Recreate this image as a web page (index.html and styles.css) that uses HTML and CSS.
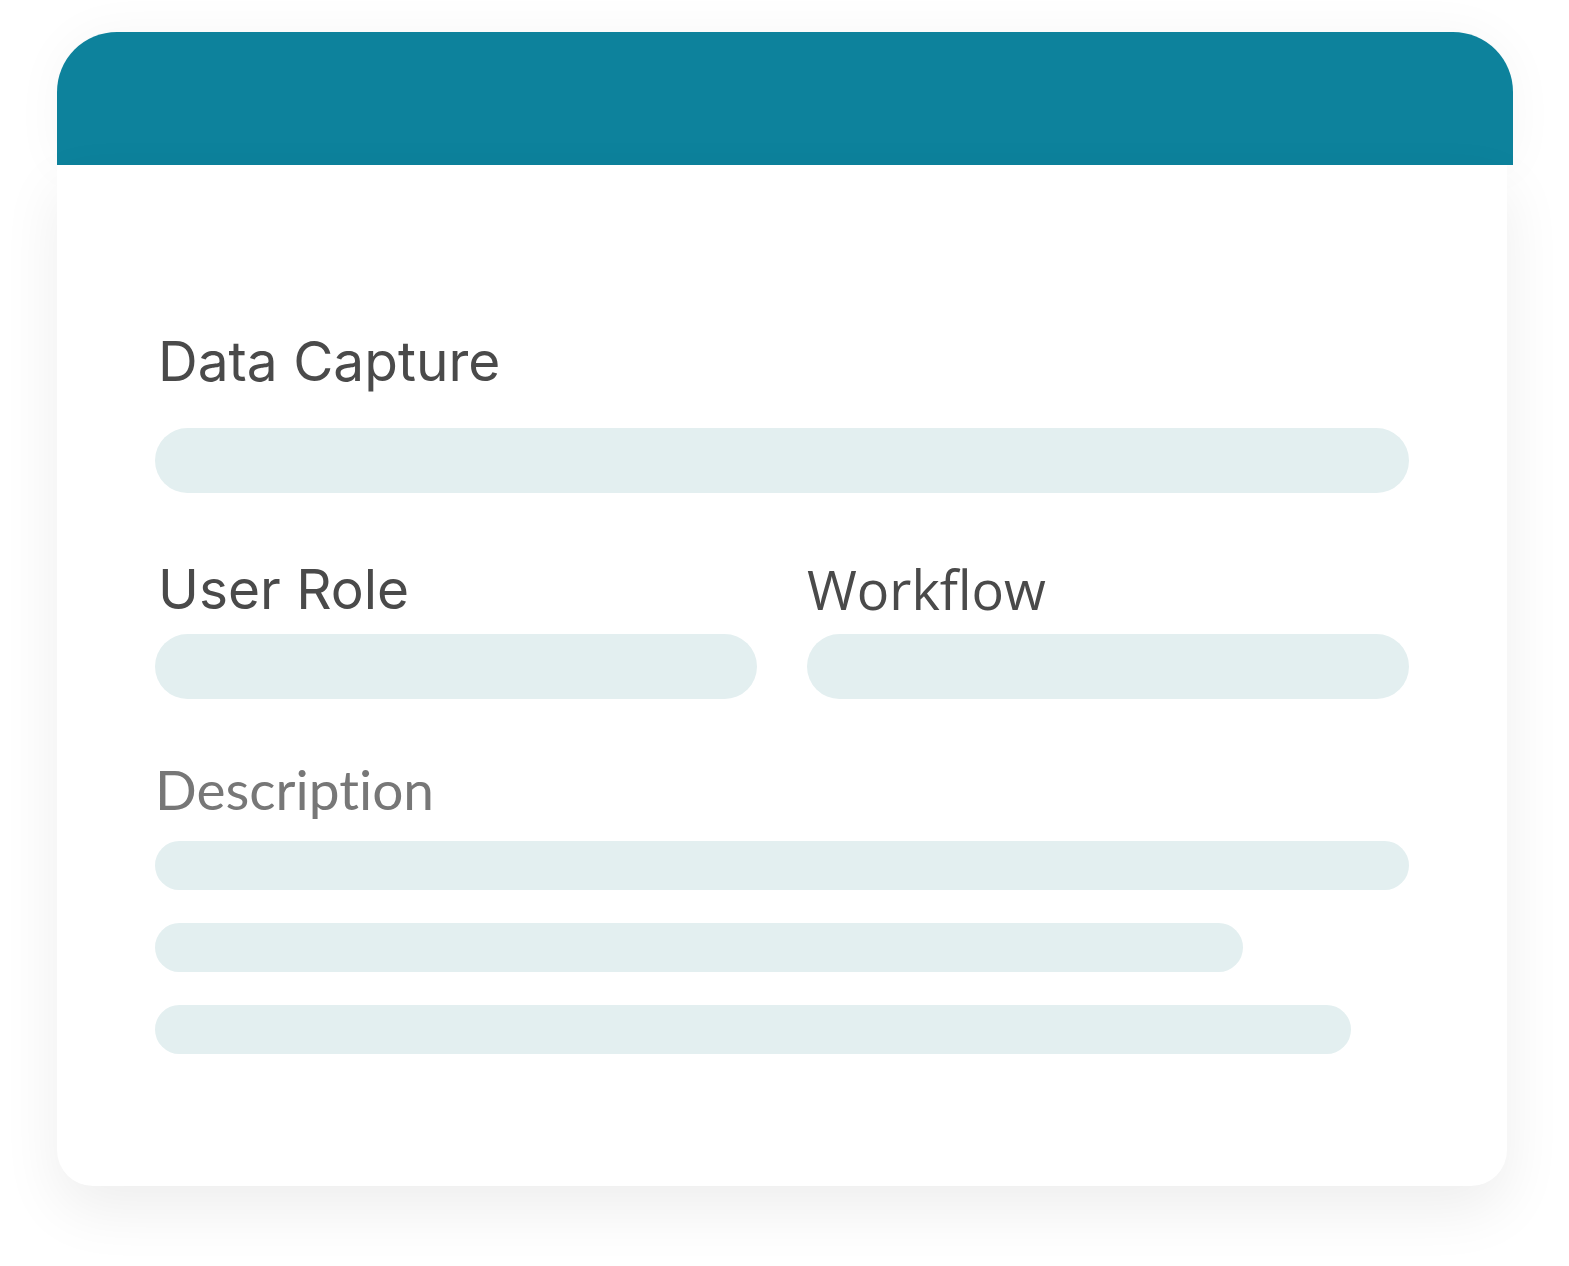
FILE: index.html
```html
<!DOCTYPE html>
<html>
<head>
<meta charset="utf-8">
<link rel="stylesheet" href="styles.css">
</head>
<body>
<div class="page">
  <div class="card">
    <div class="card-header"></div>
    <div class="card-body">
      <div class="label label-inter">Data Capture</div>
      <div class="bar bar-tall bar-full first-bar"></div>
      <div class="cols">
        <div class="col">
          <div class="label label-inter">User Role</div>
          <div class="bar bar-tall bar-col"></div>
        </div>
        <div class="col">
          <div class="label label-open">Workflow</div>
          <div class="bar bar-tall bar-col"></div>
        </div>
      </div>
      <div class="label label-desc">Description</div>
      <div class="desc-bars">
        <div class="bar bar-thin bar-full"></div>
        <div class="bar bar-thin bar-w2"></div>
        <div class="bar bar-thin bar-w3"></div>
      </div>
    </div>
  </div>
</div>
</body>
</html>
```
FILE: styles.css
```css
html, body {
  margin: 0;
  padding: 0;
  background: #ffffff;
}
.page {
  padding: 32px 0 80px 57px;
}
.card {
  width: 1456px;
  display: flex;
  flex-direction: column;
}
.card-header {
  height: 133px;
  background: #0d829c;
  border-radius: 60px 60px 0 0;
  box-shadow: 0 0 50px rgba(0,0,0,0.04);
}
.card-body {
  width: 1450px;
  box-sizing: border-box;
  background: #ffffff;
  border-radius: 0 0 36px 36px;
  padding: 162px 98px 132px 98px;
  box-shadow: 0 24px 60px rgba(0,0,0,0.07);
}
.label {
  height: 68px;
  line-height: 68px;
  font-size: 55px;
  color: #4a4a4a;
  white-space: nowrap;
}
.label-inter {
  font-family: Inter, "Liberation Sans", sans-serif;
  padding-left: 3px;
}
.label-open {
  font-family: "Open Sans", "Liberation Sans", sans-serif;
  font-size: 54px;
}
.label-desc {
  font-family: Lato, "Liberation Sans", sans-serif;
  font-variant-ligatures: none;
  color: #777777;
  font-size: 55px;
  margin-top: 56px;
}
.bar {
  background: #e3eff0;
  border-radius: 40px;
}
.bar-tall {
  height: 65px;
}
.first-bar {
  margin-top: 33px;
}
.bar-thin {
  height: 49px;
}
.bar-full {
  width: 100%;
}
.bar-w2 {
  width: 1088px;
}
.bar-w3 {
  width: 1196px;
}
.cols {
  display: flex;
  gap: 50px;
  margin-top: 62px;
}
.col {
  flex: 1;
  display: flex;
  flex-direction: column;
}
.col .bar {
  margin-top: 11px;
}
.desc-bars {
  margin-top: 18px;
  display: flex;
  flex-direction: column;
  gap: 33px;
}
```
